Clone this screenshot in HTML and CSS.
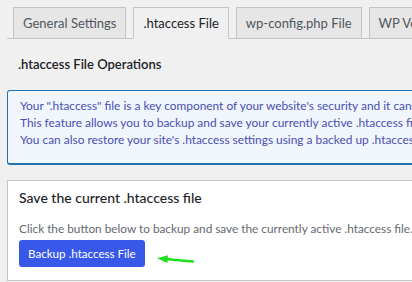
FILE: index.html
```html
<!DOCTYPE html>
<html lang="en">
<head>
    <meta charset="UTF-8">
    <meta name="viewport" content="width=device-width, initial-scale=1.0">
    <title>.htaccess File - Settings</title>
    <link rel="stylesheet" href="styles.css">
</head>
<body>

    <div class="wrap">
        <!-- Tabs -->
        <nav class="tabs">
            <a href="#" class="tab">General Settings</a>
            <a href="#" class="tab active">.htaccess File</a>
            <a href="#" class="tab">wp-config.php File</a>
            <a href="#" class="tab">WP Version Info</a>
        </nav>

        <h3 class="section-title">.htaccess File Operations</h3>

        <div class="notice">
            <p>Your ".htaccess" file is a key component of your website's security and it can be modified to implement various levels of protection mechanisms.</p>
            <p>This feature allows you to backup and save your currently active .htaccess file should you need to re-use the backed up file in the future.</p>
            <p>You can also restore your site's .htaccess settings using a backed up .htaccess file.</p>
        </div>

        <div class="card">
            <h4>Save the current .htaccess file</h4>
            <p>Click the button below to backup and save the currently active .htaccess file.</p>
            <div class="actions">
                <button class="btn">Backup .htaccess File</button>
                <svg class="arrow" width="40" height="10" viewBox="0 0 40 10">
                    <path d="M37 7.5 L12 5.2" stroke="#1ee01e" stroke-width="2.4" stroke-linecap="round" fill="none"/>
                    <path d="M1 4.3 L12 1.2 L11.5 9 Z" fill="#1ee01e"/>
                </svg>
            </div>
        </div>
    </div>

</body>
</html>
```

FILE: styles.css
```css
body {
    font-family: Lato, "Noto Sans", sans-serif;
    background-color: #f0f0f1;
    margin: 0;
    padding: 0;
    color: #1d2327;
    overflow: hidden;
}
.wrap {
    width: 560px;
    padding-left: 7px;
}
.tabs {
    display: flex;
    gap: 7px;
    padding: 7px 0 0 6px;
    border-bottom: 1px solid #c3c4c7;
}
.tab {
    display: block;
    height: 30px;
    line-height: 30px;
    padding: 0 9px;
    margin-bottom: -1px;
    font-size: 13px;
    color: #50575e;
    text-decoration: none;
    white-space: nowrap;
    background-color: #e6e6e6;
    border: 1px solid #c3c4c7;
}
.tab.active {
    color: #1d2327;
    background-color: #f0f0f1;
    border-bottom-color: #f0f0f1;
}
.section-title {
    margin: 0;
    padding: 17px 0 0 11px;
    height: 34px;
    font-size: 13px;
    font-weight: 600;
}
.notice {
    padding: 6px 12px;
    background-color: #f0f6fc;
    border: 1px solid #2271b1;
    border-bottom-width: 2px;
    border-radius: 3px;
    color: #4a4fb3;
    font-size: 11.9px;
    line-height: 17px;
    height: 60px;
}
.notice p {
    margin: 0;
    white-space: nowrap;
}
.card {
    margin-top: 15px;
    padding: 7px 11px 13px;
    background-color: #fff;
    border: 1px solid #c3c4c7;
    box-shadow: 0 1px 1px rgba(0, 0, 0, 0.04);
}
.card h4 {
    margin: 0;
    font-size: 14px;
    font-weight: 500;
    line-height: 20px;
}
.card p {
    margin: 12px 0 3px;
    font-size: 11.8px;
    line-height: 17px;
    color: #646970;
    white-space: nowrap;
}
.actions {
    display: flex;
    align-items: center;
    gap: 11px;
}
.btn {
    height: 27px;
    padding: 0 9px;
    font-family: inherit;
    font-size: 11.6px;
    color: #fff;
    background-color: #3858e9;
    border: none;
    border-radius: 3px;
}
.arrow {
    margin-top: 11px;
}
```
